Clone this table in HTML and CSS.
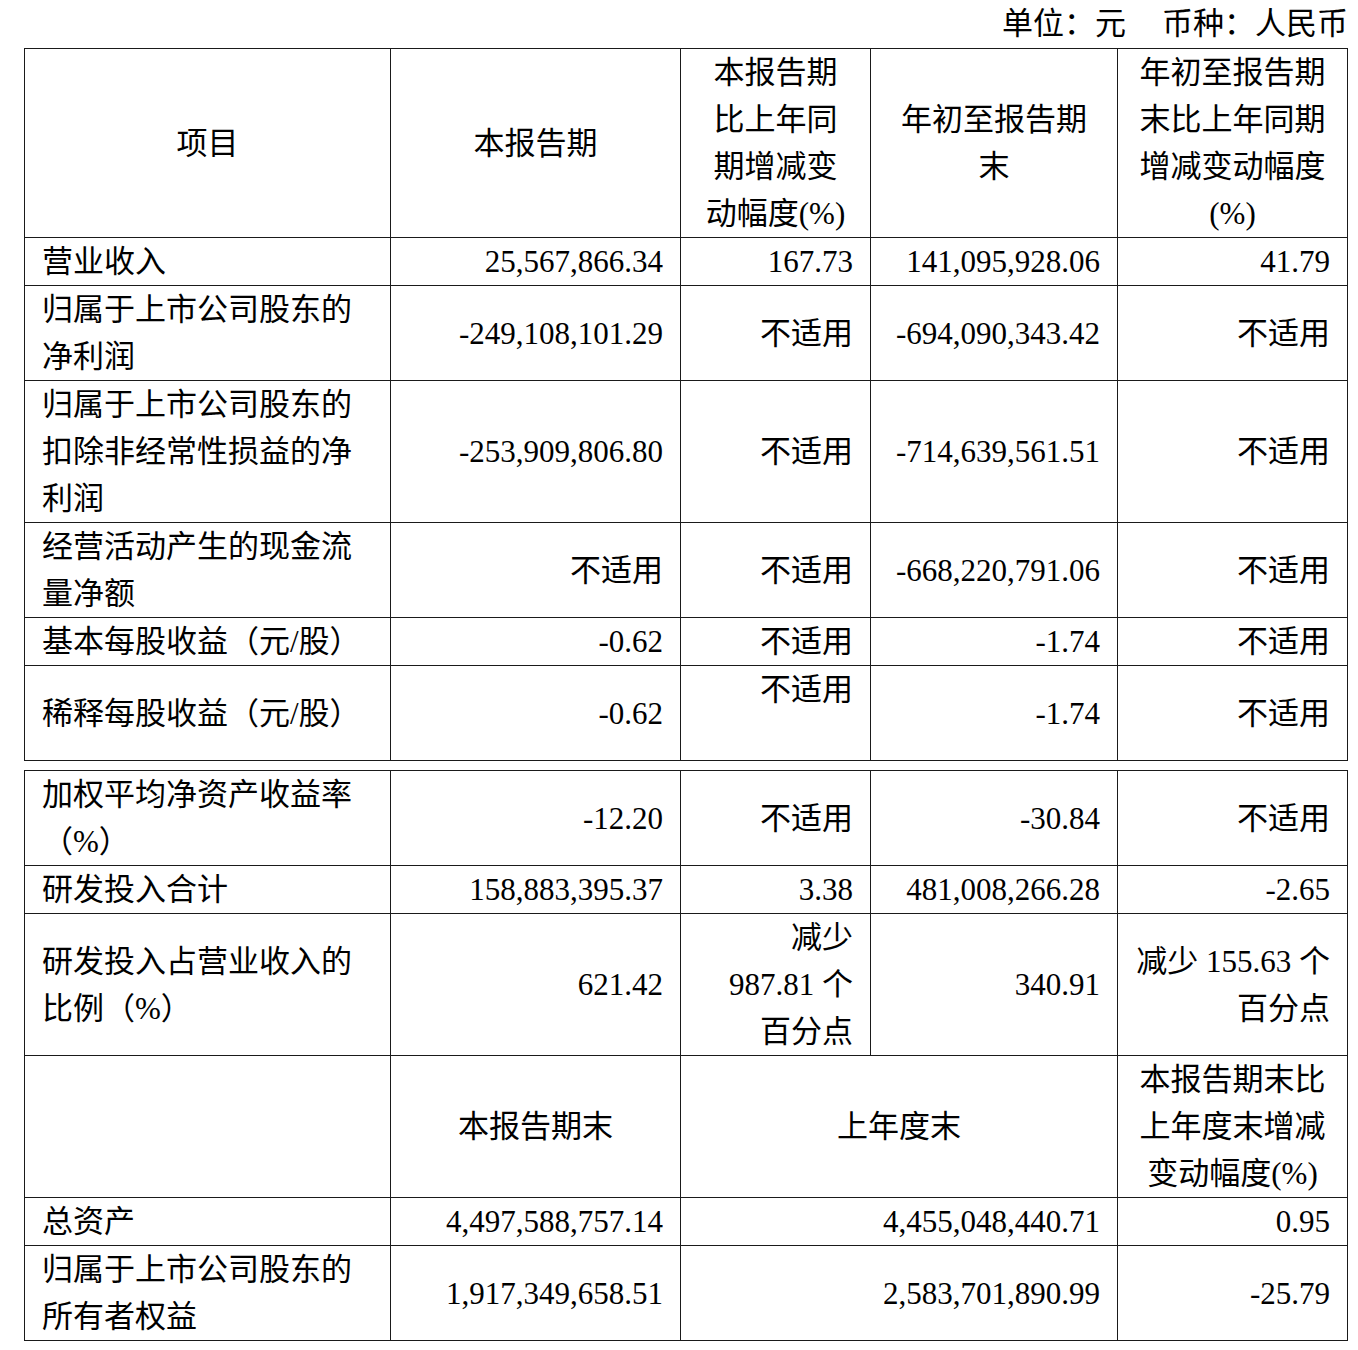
FILE: index.html
```html
<!DOCTYPE html>
<html lang="zh-CN">
<head>
<meta charset="utf-8">
<title>主要会计数据和财务指标</title>
<link rel="stylesheet" href="styles.css">
</head>
<body>
<div class="page">
  <div class="unit">单位：元<span class="gap"></span>币种：人民币</div>
  <table class="fin">
    <colgroup>
      <col class="c1"><col class="c2"><col class="c3"><col class="c4"><col class="c5">
    </colgroup>
    <tr>
      <td class="ctr">项目</td>
      <td class="ctr">本报告期</td>
      <td class="ctr">本报告期<br>比上年同<br>期增减变<br>动幅度(%)</td>
      <td class="ctr">年初至报告期<br>末</td>
      <td class="ctr">年初至报告期<br>末比上年同期<br>增减变动幅度<br>(%)</td>
    </tr>
    <tr>
      <td>营业收入</td>
      <td class="num">25,567,866.34</td>
      <td class="num">167.73</td>
      <td class="num">141,095,928.06</td>
      <td class="num">41.79</td>
    </tr>
    <tr>
      <td>归属于上市公司股东的<br>净利润</td>
      <td class="num">-249,108,101.29</td>
      <td class="num">不适用</td>
      <td class="num">-694,090,343.42</td>
      <td class="num">不适用</td>
    </tr>
    <tr>
      <td>归属于上市公司股东的<br>扣除非经常性损益的净<br>利润</td>
      <td class="num">-253,909,806.80</td>
      <td class="num">不适用</td>
      <td class="num">-714,639,561.51</td>
      <td class="num">不适用</td>
    </tr>
    <tr>
      <td>经营活动产生的现金流<br>量净额</td>
      <td class="num">不适用</td>
      <td class="num">不适用</td>
      <td class="num">-668,220,791.06</td>
      <td class="num">不适用</td>
    </tr>
    <tr>
      <td>基本每股收益（元/股）</td>
      <td class="num">-0.62</td>
      <td class="num">不适用</td>
      <td class="num">-1.74</td>
      <td class="num">不适用</td>
    </tr>
    <tr>
      <td>稀释每股收益（元/股）</td>
      <td class="num">-0.62</td>
      <td class="num">不适用<br>&nbsp;</td>
      <td class="num">-1.74</td>
      <td class="num">不适用</td>
    </tr>
  </table>
  <table class="fin second">
    <colgroup>
      <col class="c1"><col class="c2"><col class="c3"><col class="c4"><col class="c5">
    </colgroup>
    <tr>
      <td>加权平均净资产收益率<br>（%）</td>
      <td class="num">-12.20</td>
      <td class="num">不适用</td>
      <td class="num">-30.84</td>
      <td class="num">不适用</td>
    </tr>
    <tr>
      <td>研发投入合计</td>
      <td class="num">158,883,395.37</td>
      <td class="num">3.38</td>
      <td class="num">481,008,266.28</td>
      <td class="num">-2.65</td>
    </tr>
    <tr>
      <td>研发投入占营业收入的<br>比例（%）</td>
      <td class="num">621.42</td>
      <td class="num">减少<br>987.81 个<br>百分点</td>
      <td class="num">340.91</td>
      <td class="num">减少 155.63 个<br>百分点</td>
    </tr>
    <tr>
      <td></td>
      <td class="ctr">本报告期末</td>
      <td class="ctr" colspan="2">上年度末</td>
      <td class="ctr">本报告期末比<br>上年度末增减<br>变动幅度(%)</td>
    </tr>
    <tr>
      <td>总资产</td>
      <td class="num">4,497,588,757.14</td>
      <td class="num" colspan="2">4,455,048,440.71</td>
      <td class="num">0.95</td>
    </tr>
    <tr>
      <td>归属于上市公司股东的<br>所有者权益</td>
      <td class="num">1,917,349,658.51</td>
      <td class="num" colspan="2">2,583,701,890.99</td>
      <td class="num">-25.79</td>
    </tr>
  </table>
</div>
</body>
</html>
```
FILE: styles.css
```css
html, body {
  margin: 0;
  padding: 0;
  background: #ffffff;
}

body {
  font-family: "Liberation Serif", "Noto Sans CJK SC", serif;
  font-size: 31px;
  color: #000000;
}

.page {
  width: 1324px;
  padding: 0 10px 0 24px;
}

.unit {
  height: 48px;
  line-height: 48px;
  text-align: right;
  white-space: nowrap;
}

.unit .gap {
  display: inline-block;
  width: 36px;
}

.fin {
  width: 1324px;
  table-layout: fixed;
  border-collapse: collapse;
}

.fin.second {
  margin-top: 9px;
}

.c1 { width: 366px; }
.c2 { width: 290px; }
.c3 { width: 190px; }
.c4 { width: 247px; }
.c5 { width: 230px; }

.fin td {
  border: 1px solid #1a1a1a;
  padding: 0 17px 0 17px;
  line-height: 47px;
  vertical-align: middle;
  text-align: left;
  white-space: nowrap;
}

.fin td.num {
  text-align: right;
}

.fin td.ctr {
  text-align: center;
}
```
